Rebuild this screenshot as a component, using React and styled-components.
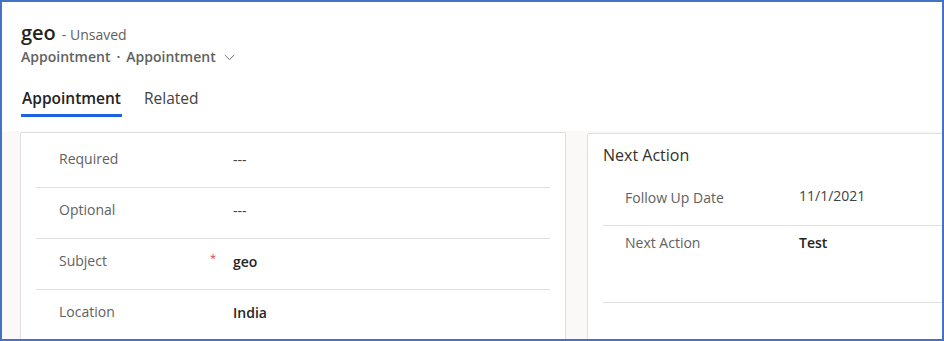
import React from "react";
import styled, { createGlobalStyle } from "styled-components";

const GlobalStyle = createGlobalStyle`
  * { box-sizing: border-box; }
  body {
    margin: 0;
    font-family: "Segoe UI", "Open Sans", sans-serif;
    color: #242424;
  }
`;

const Frame = styled.div`
  width: 944px;
  height: 341px;
  border: 2px solid #4472c4;
  overflow: hidden;
  display: flex;
  flex-direction: column;
  background: #faf9f8;
`;

const Header = styled.header`
  background: #fff;
  height: 129px;
  padding: 17px 19px 0;
  flex-shrink: 0;
`;

const TitleRow = styled.div`
  display: flex;
  align-items: baseline;
  gap: 6px;
  height: 28px;
`;

const Title = styled.h1`
  margin: 0;
  font-size: 20px;
  font-weight: 600;
  line-height: 28px;
  color: #242424;
`;

const Status = styled.span`
  font-size: 14px;
  color: #616161;
`;

const Breadcrumb = styled.div`
  display: flex;
  align-items: center;
  gap: 6px;
  height: 20px;
  margin-top: -1px;
  font-size: 14px;
  font-weight: 600;
  color: #616161;
`;

const Tabs = styled.nav`
  display: flex;
  gap: 21px;
  margin-top: 21px;
`;

const Tab = styled.div`
  font-size: 15.5px;
  line-height: 22px;
  font-weight: ${p => (p.active ? 600 : 400)};
  color: ${p => (p.active ? "#242424" : "#424242")};
  padding: 0 1px 5px;
  border-bottom: 3px solid ${p => (p.active ? "#1f62e0" : "transparent")};
`;

const Body = styled.main`
  flex: 1;
  display: flex;
  align-items: flex-start;
  gap: 21px;
  padding: 1px 0 0 18px;
`;

const Card = styled.section`
  flex-shrink: 0;
  width: ${p => p.width}px;
  height: 240px;
  margin-top: ${p => p.offset || 0}px;
  background: #fff;
  border: 1px solid #dedede;
  border-radius: 2px;
  padding: ${p => p.pad};
`;

const SectionTitle = styled.h2`
  margin: 0 0 9px 0;
  font-size: 16px;
  font-weight: 400;
  line-height: 22px;
  color: #323130;
`;

const Row = styled.div`
  display: flex;
  height: ${p => p.height || 51}px;
  padding: ${p => p.top || 12}px 0 0 ${p => p.indent || 23}px;
  border-bottom: ${p => (p.last ? "none" : "1px solid #e1dfdd")};
`;

const Label = styled.div`
  position: relative;
  width: 174px;
  flex-shrink: 0;
  font-size: 14px;
  line-height: 20px;
  color: #616161;
`;

const Required = styled.span`
  position: absolute;
  left: 151px;
  top: -3px;
  font-size: 11px;
  color: #e03a3a;
`;

const Value = styled.div`
  margin-top: ${p => p.shift || 0}px;
  font-size: 14px;
  line-height: 20px;
  font-weight: ${p => (p.strong ? 600 : 400)};
  color: ${p => (p.strong ? "#242424" : "#424242")};
`;

const Chevron = () => (
  <svg width="11" height="7" viewBox="0 0 11 7" style={{ marginLeft: 2, marginTop: 2 }}>
    <path d="M0.8 1 L5.5 5.6 L10.2 1" fill="none" stroke="#707070" strokeWidth="1" />
  </svg>
);

const leftFields = [
  { label: "Required", value: "---" },
  { label: "Optional", value: "---" },
  { label: "Subject", value: "geo", strong: true, required: true },
  { label: "Location", value: "India", strong: true },
];

export default function App() {
  return (
    <>
      <GlobalStyle />
      <Frame>
        <Header>
          <TitleRow>
            <Title>geo</Title>
            <Status>- Unsaved</Status>
          </TitleRow>
          <Breadcrumb>
            <span>Appointment</span>
            <span>·</span>
            <span>Appointment</span>
            <Chevron />
          </Breadcrumb>
          <Tabs>
            <Tab active>Appointment</Tab>
            <Tab>Related</Tab>
          </Tabs>
        </Header>
        <Body>
          <Card width={546} pad="4px 15px 0 15px">
            {leftFields.map((f, i) => (
              <Row key={f.label} last={i === leftFields.length - 1}>
                <Label>
                  {f.label}
                  {f.required && <Required>*</Required>}
                </Label>
                <Value strong={f.strong} shift={1}>{f.value}</Value>
              </Row>
            ))}
          </Card>
          <Card width={420} offset={1} pad="10px 0 0 15px">
            <SectionTitle>Next Action</SectionTitle>
            <Row top={13} indent={22}>
              <Label>Follow Up Date</Label>
              <Value shift={-2}>11/1/2021</Value>
            </Row>
            <Row top={7} height={77} indent={22}>
              <Label>Next Action</Label>
              <Value strong>Test</Value>
            </Row>
          </Card>
        </Body>
      </Frame>
    </>
  );
}
